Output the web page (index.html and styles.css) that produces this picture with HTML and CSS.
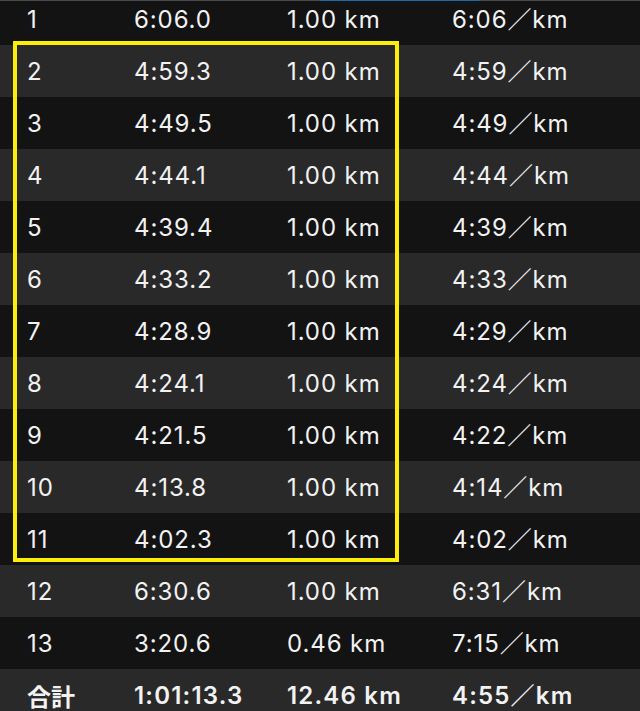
FILE: index.html
```html
<!DOCTYPE html>
<html lang="ja">
<head>
<meta charset="utf-8">
<link rel="stylesheet" href="styles.css">
</head>
<body>
<div class="screen">
  <div class="topbar"><span class="topbar-active"></span></div>
  <div class="splits">
    <div class="row dark"><span>1</span><span>6:06.0</span><span>1.00 km</span><span>6:06／km</span></div>
    <div class="highlight">
      <div class="row light"><span>2</span><span>4:59.3</span><span>1.00 km</span><span>4:59／km</span></div>
      <div class="row dark"><span>3</span><span>4:49.5</span><span>1.00 km</span><span>4:49／km</span></div>
      <div class="row light"><span>4</span><span>4:44.1</span><span>1.00 km</span><span>4:44／km</span></div>
      <div class="row dark"><span>5</span><span>4:39.4</span><span>1.00 km</span><span>4:39／km</span></div>
      <div class="row light"><span>6</span><span>4:33.2</span><span>1.00 km</span><span>4:33／km</span></div>
      <div class="row dark"><span>7</span><span>4:28.9</span><span>1.00 km</span><span>4:29／km</span></div>
      <div class="row light"><span>8</span><span>4:24.1</span><span>1.00 km</span><span>4:24／km</span></div>
      <div class="row dark"><span>9</span><span>4:21.5</span><span>1.00 km</span><span>4:22／km</span></div>
      <div class="row light"><span>10</span><span>4:13.8</span><span>1.00 km</span><span>4:14／km</span></div>
      <div class="row dark"><span>11</span><span>4:02.3</span><span>1.00 km</span><span>4:02／km</span></div>
    </div>
    <div class="row light"><span>12</span><span>6:30.6</span><span>1.00 km</span><span>6:31／km</span></div>
    <div class="row dark"><span>13</span><span>3:20.6</span><span>0.46 km</span><span>7:15／km</span></div>
    <div class="row light total"><span>合計</span><span>1:01:13.3</span><span>12.46 km</span><span>4:55／km</span></div>
  </div>
</div>
</body>
</html>
```
FILE: styles.css
```css
html, body {
  margin: 0;
  padding: 0;
  background: #131313;
}
.screen {
  position: relative;
  width: 640px;
  height: 711px;
  overflow: hidden;
  font-family: Inter, "Noto Sans CJK JP", sans-serif;
  color: #f2f2f2;
}
.topbar {
  position: absolute;
  top: 0;
  left: 0;
  right: 0;
  height: 1px;
  background: #4a4a4a;
  z-index: 2;
}
.topbar-active {
  position: absolute;
  left: 320px;
  width: 160px;
  top: 0;
  bottom: 0;
  background: #1d6aa8;
}
.splits {
  margin-top: -7px;
}
.highlight {
  position: relative;
}
.highlight::after {
  content: "";
  position: absolute;
  left: 13px;
  top: -4px;
  width: 378px;
  height: 513px;
  border: 4px solid #fcee0a;
  pointer-events: none;
}
.row {
  display: grid;
  grid-template-columns: 107px 153px 165px 1fr;
  align-items: center;
  height: 52px;
  box-sizing: border-box;
  padding-left: 27px;
  padding-top: 1px;
  font-size: 24px;
  line-height: 1;
  letter-spacing: 0.9px;
  white-space: nowrap;
}
.dark { background: #131313; }
.light { background: #292929; }
.total {
  font-weight: 600;
  letter-spacing: 1.2px;
}
.total span:first-child {
  font-family: "Noto Sans CJK JP", sans-serif;
  font-weight: 700;
  letter-spacing: 0;
}
```
